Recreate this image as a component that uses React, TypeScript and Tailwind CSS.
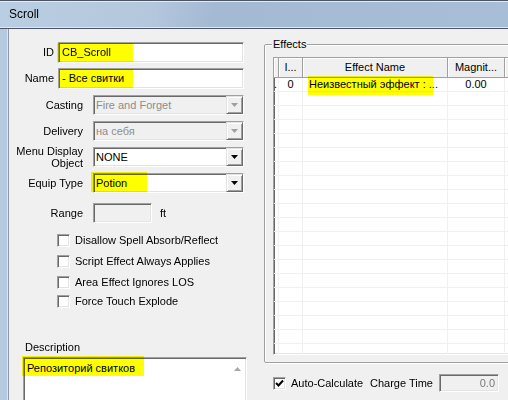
const sunken =
  "border border-t-[#a0a0a0] border-l-[#a0a0a0] border-r-white border-b-white shadow-[inset_1px_1px_0_#696969,inset_-1px_-1px_0_#e3e3e3]";
const raised =
  "border border-t-[#e3e3e3] border-l-[#e3e3e3] border-r-[#696969] border-b-[#696969] shadow-[inset_1px_1px_0_#ffffff,inset_-1px_-1px_0_#a0a0a0]";

// marker highlight painted over the form
function Mark({ className }: { className: string }) {
  return <span className={`pointer-events-none absolute bg-[#ffff00] mix-blend-multiply ${className}`} />;
}

function Arrow({ disabled }: { disabled?: boolean }) {
  return (
    <div className={`flex h-full w-[17px] shrink-0 items-center justify-center bg-[#f0f0f0] ${raised}`}>
      <svg width="7" height="4" viewBox="0 0 7 4">
        <polygon points="0,0 7,0 3.5,4" fill={disabled ? "#a0a0a0" : "#000"} />
      </svg>
    </div>
  );
}

function Combo({ value, disabled, label, mt, mark }: { value: string; disabled?: boolean; label: React.ReactNode; mt: string; mark?: boolean }) {
  return (
    <div className={`flex h-[20px] items-center ${mt}`}>
      <div className="w-[74px] text-right leading-[12px]">{label}</div>
      <div className={`relative ml-[10px] flex h-full w-[151px] items-center ${sunken} ${disabled ? "bg-[#f0f0f0] text-[#8d8d8d]" : "bg-white"}`}>
        <span className="flex-1 pl-[2px]">{value}</span>
        <Arrow disabled={disabled} />
        {mark && <Mark className="left-[-3px] top-[-2px] h-[20px] w-[56px]" />}
      </div>
    </div>
  );
}

function Check({ text, mt, checked }: { text: string; mt: string; checked?: boolean }) {
  return (
    <div className={`flex h-[13px] items-center ${mt}`}>
      <div className={`flex h-[13px] w-[13px] shrink-0 items-center justify-center bg-white ${sunken}`}>
        {checked && (
          <svg width="9" height="9" viewBox="0 0 9 9">
            <polyline points="1,4 3.5,6.5 8,1.5" fill="none" stroke="#000" strokeWidth="2" />
          </svg>
        )}
      </div>
      {text && <span className="ml-[5px]">{text}</span>}
    </div>
  );
}

export default function App() {
  const rows = Array.from({ length: 21 });
  return (
    <div className="flex h-[400px] w-[508px] flex-col overflow-hidden bg-[#f0f0f0] font-['Liberation_Sans',Arial,sans-serif] text-[11px] leading-[13px] text-black">
      {/* title bar */}
      <div className="flex h-[29px] shrink-0 items-center border-y border-[#4d5565] bg-[linear-gradient(100deg,#bacee3_0%,#b3c7dd_30%,#a4bad2_42%,#a8bed6_100%)] pl-[9px] text-[12px] shadow-[inset_0_1px_0_#e2eaf3,inset_0_-1px_0_#dfe8f2]">
        Scroll
      </div>

      <div className="flex min-h-0 flex-1">
        <div className="w-[9px] shrink-0 border-r border-[#8e99a7] bg-[#b6cadf] shadow-[inset_-1px_0_0_#dce6f0]" />

        {/* left form */}
        <div className="w-[249px] shrink-0">
          <div className="mt-[13px] flex h-[21px] items-center">
            <div className="w-[45px] text-right">ID</div>
            <div className={`relative ml-[4px] flex h-full w-[186px] items-center bg-white pl-[3px] ${sunken}`}>
              CB_Scroll
              <Mark className="left-[-2px] top-0 h-[19px] w-[76px]" />
            </div>
          </div>
          <div className="mt-[5px] flex h-[21px] items-center">
            <div className="w-[45px] text-right">Name</div>
            <div className={`relative ml-[4px] flex h-full w-[186px] items-center bg-white pl-[3px] ${sunken}`}>
              - Все свитки
              <Mark className="left-[1px] top-0 h-[19px] w-[73px]" />
            </div>
          </div>

          <Combo mt="mt-[6px]" label="Casting" value="Fire and Forget" disabled />
          <Combo mt="mt-[6px]" label="Delivery" value="на себя" disabled />
          <Combo
            mt="mt-[6px]"
            label={
              <>
                Menu Display
                <br />
                Object
              </>
            }
            value="NONE"
          />
          <Combo mt="mt-[6px]" label="Equip Type" value="Potion" mark />

          <div className="mt-[10px] flex h-[20px] items-center">
            <div className="w-[74px] text-right">Range</div>
            <div className={`ml-[10px] h-full w-[59px] bg-[#f0f0f0] ${sunken}`} />
            <span className="ml-[8px]">ft</span>
          </div>

          <div className="pl-[48px]">
            <Check mt="mt-[11px]" text="Disallow Spell Absorb/Reflect" />
            <Check mt="mt-[8px]" text="Script Effect Always Applies" />
            <Check mt="mt-[8px]" text="Area Effect Ignores LOS" />
            <Check mt="mt-[6px]" text="Force Touch Explode" />
          </div>

          <div className="ml-[16px] mt-[33px]">Description</div>
          <div className={`relative ml-[14px] mt-[3px] h-[60px] w-[224px] bg-white ${sunken}`}>
            <div className="pl-[3px] pt-[4px]">Репозиторий свитков</div>
            <svg className="absolute right-[5px] top-[9px]" width="7" height="4" viewBox="0 0 7 4">
              <polygon points="3.5,0 7,4 0,4" fill="#a8a8a8" />
            </svg>
            <Mark className="left-[-2px] top-[-2px] h-[20px] w-[122px]" />
          </div>
        </div>

        {/* right: effects */}
        <div className="min-w-0 flex-1">
          <div className="relative ml-[6px] mt-[15px] h-[319px] w-[262px] rounded-[2px] border border-[#a0a0a0] shadow-[1px_1px_0_#ffffff,inset_1px_1px_0_#ffffff]">
            <span className="absolute left-[7px] top-[-7px] bg-[#f0f0f0] px-[1px]">Effects</span>

            <div className={`relative ml-[8px] mt-[12px] h-[298px] w-[260px] overflow-hidden bg-white ${sunken}`}>
              <div className="flex h-[20px] bg-[#f0f0f0]">
                {[
                  ["w-[5px]", ""],
                  ["w-[24px]", "I..."],
                  ["w-[145px]", "Effect Name"],
                  ["w-[57px]", "Magnit..."],
                  ["flex-1", ""],
                ].map(([w, t], i) => (
                  <div
                    key={i}
                    className={`${w} flex shrink-0 items-center justify-center border-b border-r border-b-[#a0a0a0] border-r-[#a0a0a0] shadow-[inset_1px_1px_0_#ffffff]`}
                  >
                    {t}
                  </div>
                ))}
              </div>
              {rows.map((_, r) => (
                <div key={r} className="flex h-[14px] border-b border-[#f0f0f0]">
                  <div className="flex w-[5px] shrink-0 items-center border-r border-[#f0f0f0]">{r === 0 ? "." : ""}</div>
                  <div className="flex w-[24px] shrink-0 items-center justify-center border-r border-[#f0f0f0]">{r === 0 ? "0" : ""}</div>
                  <div className="flex w-[145px] shrink-0 items-center border-r border-[#f0f0f0] pl-[6px]">
                    {r === 0 ? "Неизвестный эффект : ..." : ""}
                  </div>
                  <div className="flex w-[57px] shrink-0 items-center justify-center border-r border-[#f0f0f0]">{r === 0 ? "0.00" : ""}</div>
                  <div className="flex-1" />
                </div>
              ))}
              <Mark className="left-[34px] top-[18px] h-[19px] w-[125px]" />
            </div>
          </div>

          <div className="ml-[15px] mt-[11px] flex h-[18px] items-center">
            <Check mt="" text="" checked />
            <span className="ml-[5px] w-[79px]">Auto-Calculate</span>
            <span className="w-[69px]">Charge Time</span>
            <div className={`flex h-full w-[60px] items-center justify-end bg-[#f0f0f0] pr-[3px] text-[#7a7a7a] ${sunken}`}>
              0.0
            </div>
          </div>
        </div>
      </div>
    </div>
  );
}
